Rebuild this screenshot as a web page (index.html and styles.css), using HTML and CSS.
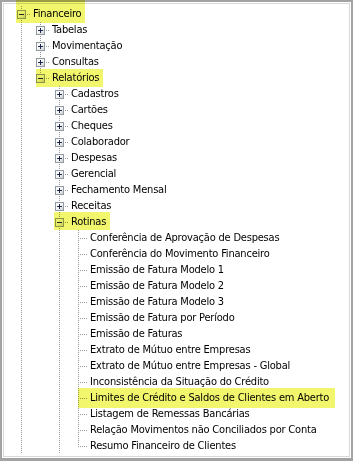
FILE: index.html
```html
<!DOCTYPE html>
<html lang="pt-BR">
<head>
<meta charset="utf-8">
<title>Financeiro</title>
<link rel="stylesheet" href="styles.css">
</head>
<body>
<svg class="defs" width="0" height="0" aria-hidden="true">
  <defs>
    <linearGradient id="bxg" x1="0" y1="0" x2="1" y2="1">
      <stop offset="0" stop-color="#ffffff"/>
      <stop offset="0.55" stop-color="#f3f3ef"/>
      <stop offset="1" stop-color="#c9c9c1"/>
    </linearGradient>
  </defs>
</svg>
<div class="frame">
  <div class="tree">
    <div class="row">
      <div class="node hl hl-root">
        <div class="cell tee"><svg class="bx" width="9" height="9" viewBox="0 0 9 9"><rect x=".5" y=".5" width="8" height="8" fill="url(#bxg)" stroke="#8f9aa5"/><path d="M2 4.5h5" stroke="#1c2550"/></svg></div>
        <span class="label">Financeiro</span>
      </div>
    </div>

    <div class="row"><div class="cell v"></div>
      <div class="node"><div class="cell tee"><svg class="bx" width="9" height="9" viewBox="0 0 9 9"><rect x=".5" y=".5" width="8" height="8" fill="url(#bxg)" stroke="#8f9aa5"/><path d="M2 4.5h5M4.5 2v5" stroke="#1c2550"/></svg></div><span class="label">Tabelas</span></div>
    </div>
    <div class="row"><div class="cell v"></div>
      <div class="node"><div class="cell tee"><svg class="bx" width="9" height="9" viewBox="0 0 9 9"><rect x=".5" y=".5" width="8" height="8" fill="url(#bxg)" stroke="#8f9aa5"/><path d="M2 4.5h5M4.5 2v5" stroke="#1c2550"/></svg></div><span class="label">Movimentação</span></div>
    </div>
    <div class="row"><div class="cell v"></div>
      <div class="node"><div class="cell tee"><svg class="bx" width="9" height="9" viewBox="0 0 9 9"><rect x=".5" y=".5" width="8" height="8" fill="url(#bxg)" stroke="#8f9aa5"/><path d="M2 4.5h5M4.5 2v5" stroke="#1c2550"/></svg></div><span class="label">Consultas</span></div>
    </div>
    <div class="row"><div class="cell v"></div>
      <div class="node hl hl-rel"><div class="cell ell"><svg class="bx" width="9" height="9" viewBox="0 0 9 9"><rect x=".5" y=".5" width="8" height="8" fill="url(#bxg)" stroke="#8f9aa5"/><path d="M2 4.5h5" stroke="#1c2550"/></svg></div><span class="label">Relatórios</span></div>
    </div>

    <div class="row"><div class="cell v"></div><div class="cell"></div>
      <div class="node"><div class="cell tee"><svg class="bx" width="9" height="9" viewBox="0 0 9 9"><rect x=".5" y=".5" width="8" height="8" fill="url(#bxg)" stroke="#8f9aa5"/><path d="M2 4.5h5M4.5 2v5" stroke="#1c2550"/></svg></div><span class="label">Cadastros</span></div>
    </div>
    <div class="row"><div class="cell v"></div><div class="cell"></div>
      <div class="node"><div class="cell tee"><svg class="bx" width="9" height="9" viewBox="0 0 9 9"><rect x=".5" y=".5" width="8" height="8" fill="url(#bxg)" stroke="#8f9aa5"/><path d="M2 4.5h5M4.5 2v5" stroke="#1c2550"/></svg></div><span class="label">Cartões</span></div>
    </div>
    <div class="row"><div class="cell v"></div><div class="cell"></div>
      <div class="node"><div class="cell tee"><svg class="bx" width="9" height="9" viewBox="0 0 9 9"><rect x=".5" y=".5" width="8" height="8" fill="url(#bxg)" stroke="#8f9aa5"/><path d="M2 4.5h5M4.5 2v5" stroke="#1c2550"/></svg></div><span class="label">Cheques</span></div>
    </div>
    <div class="row"><div class="cell v"></div><div class="cell"></div>
      <div class="node"><div class="cell tee"><svg class="bx" width="9" height="9" viewBox="0 0 9 9"><rect x=".5" y=".5" width="8" height="8" fill="url(#bxg)" stroke="#8f9aa5"/><path d="M2 4.5h5M4.5 2v5" stroke="#1c2550"/></svg></div><span class="label">Colaborador</span></div>
    </div>
    <div class="row"><div class="cell v"></div><div class="cell"></div>
      <div class="node"><div class="cell tee"><svg class="bx" width="9" height="9" viewBox="0 0 9 9"><rect x=".5" y=".5" width="8" height="8" fill="url(#bxg)" stroke="#8f9aa5"/><path d="M2 4.5h5M4.5 2v5" stroke="#1c2550"/></svg></div><span class="label">Despesas</span></div>
    </div>
    <div class="row"><div class="cell v"></div><div class="cell"></div>
      <div class="node"><div class="cell tee"><svg class="bx" width="9" height="9" viewBox="0 0 9 9"><rect x=".5" y=".5" width="8" height="8" fill="url(#bxg)" stroke="#8f9aa5"/><path d="M2 4.5h5M4.5 2v5" stroke="#1c2550"/></svg></div><span class="label">Gerencial</span></div>
    </div>
    <div class="row"><div class="cell v"></div><div class="cell"></div>
      <div class="node"><div class="cell tee"><svg class="bx" width="9" height="9" viewBox="0 0 9 9"><rect x=".5" y=".5" width="8" height="8" fill="url(#bxg)" stroke="#8f9aa5"/><path d="M2 4.5h5M4.5 2v5" stroke="#1c2550"/></svg></div><span class="label">Fechamento Mensal</span></div>
    </div>
    <div class="row"><div class="cell v"></div><div class="cell"></div>
      <div class="node"><div class="cell tee"><svg class="bx" width="9" height="9" viewBox="0 0 9 9"><rect x=".5" y=".5" width="8" height="8" fill="url(#bxg)" stroke="#8f9aa5"/><path d="M2 4.5h5M4.5 2v5" stroke="#1c2550"/></svg></div><span class="label">Receitas</span></div>
    </div>
    <div class="row"><div class="cell v"></div><div class="cell"></div>
      <div class="node hl hl-rot"><div class="cell tee"><svg class="bx" width="9" height="9" viewBox="0 0 9 9"><rect x=".5" y=".5" width="8" height="8" fill="url(#bxg)" stroke="#8f9aa5"/><path d="M2 4.5h5" stroke="#1c2550"/></svg></div><span class="label">Rotinas</span></div>
    </div>

    <div class="row"><div class="cell v"></div><div class="cell"></div><div class="cell v"></div>
      <div class="node"><div class="cell tee"></div><span class="label">Conferência de Aprovação de Despesas</span></div></div>
    <div class="row"><div class="cell v"></div><div class="cell"></div><div class="cell v"></div>
      <div class="node"><div class="cell tee"></div><span class="label">Conferência do Movimento Financeiro</span></div></div>
    <div class="row"><div class="cell v"></div><div class="cell"></div><div class="cell v"></div>
      <div class="node"><div class="cell tee"></div><span class="label">Emissão de Fatura Modelo 1</span></div></div>
    <div class="row"><div class="cell v"></div><div class="cell"></div><div class="cell v"></div>
      <div class="node"><div class="cell tee"></div><span class="label">Emissão de Fatura Modelo 2</span></div></div>
    <div class="row"><div class="cell v"></div><div class="cell"></div><div class="cell v"></div>
      <div class="node"><div class="cell tee"></div><span class="label">Emissão de Fatura Modelo 3</span></div></div>
    <div class="row"><div class="cell v"></div><div class="cell"></div><div class="cell v"></div>
      <div class="node"><div class="cell tee"></div><span class="label">Emissão de Fatura por Período</span></div></div>
    <div class="row"><div class="cell v"></div><div class="cell"></div><div class="cell v"></div>
      <div class="node"><div class="cell tee"></div><span class="label">Emissão de Faturas</span></div></div>
    <div class="row"><div class="cell v"></div><div class="cell"></div><div class="cell v"></div>
      <div class="node"><div class="cell tee"></div><span class="label">Extrato de Mútuo entre Empresas</span></div></div>
    <div class="row"><div class="cell v"></div><div class="cell"></div><div class="cell v"></div>
      <div class="node"><div class="cell tee"></div><span class="label">Extrato de Mútuo entre Empresas - Global</span></div></div>
    <div class="row"><div class="cell v"></div><div class="cell"></div><div class="cell v"></div>
      <div class="node"><div class="cell tee"></div><span class="label">Inconsistência da Situação do Crédito</span></div></div>
    <div class="row"><div class="cell v"></div><div class="cell"></div><div class="cell v"></div>
      <div class="node hl hl-leaf"><div class="cell tee"></div><span class="label">Limites de Crédito e Saldos de Clientes em Aberto</span></div></div>
    <div class="row"><div class="cell v"></div><div class="cell"></div><div class="cell v"></div>
      <div class="node"><div class="cell tee"></div><span class="label">Listagem de Remessas Bancárias</span></div></div>
    <div class="row"><div class="cell v"></div><div class="cell"></div><div class="cell v"></div>
      <div class="node"><div class="cell tee"></div><span class="label">Relação Movimentos não Conciliados por Conta</span></div></div>
    <div class="row"><div class="cell v"></div><div class="cell"></div><div class="cell v"></div>
      <div class="node"><div class="cell ell"></div><span class="label">Resumo Financeiro de Clientes</span></div></div>
  </div>
</div>
</body>
</html>
```

FILE: styles.css
```css
html, body {
  margin: 0;
  padding: 0;
  background: #ffffff;
}

body {
  width: 356px;
  height: 461px;
  overflow: hidden;
  font-family: "DejaVu Sans Condensed", "DejaVu Sans", "Liberation Sans", sans-serif;
  font-size: 11px;
  letter-spacing: -0.2px;
  color: #000000;
}

.defs {
  display: block;
  width: 0;
  height: 0;
}

.frame {
  box-sizing: border-box;
  width: 353px;
  height: 461px;
  border: 2px solid #a3a3a3;
  border-bottom-width: 3px;
  box-shadow: inset 0 0 0 1px #ffffff, inset 0 0 0 2px #d9d9d9;
  padding: 4px 0 0 10px;
}

.tree {
  display: flex;
  flex-direction: column;
}

.row {
  display: flex;
  height: 16px;
}

.node {
  display: flex;
  position: relative;
}

.cell {
  flex: none;
  width: 19px;
  height: 16px;
  display: flex;
  align-items: flex-start;
}

.v {
  background: repeating-linear-gradient(to bottom, #999999 0 1px, transparent 1px 2px) 9px 0 / 1px 16px no-repeat;
}

.tee {
  background:
    repeating-linear-gradient(to bottom, #999999 0 1px, transparent 1px 2px) 9px 0 / 1px 16px no-repeat,
    repeating-linear-gradient(to right, #999999 0 1px, transparent 1px 2px) 9px 8px / 10px 1px no-repeat;
}

.ell {
  background:
    repeating-linear-gradient(to bottom, #999999 0 1px, transparent 1px 2px) 9px 0 / 1px 9px no-repeat,
    repeating-linear-gradient(to right, #999999 0 1px, transparent 1px 2px) 9px 8px / 10px 1px no-repeat;
}

.bx {
  display: block;
  margin: 4px 0 0 5px;
}

.label {
  display: block;
  padding-left: 2px;
  line-height: 16px;
  white-space: nowrap;
}

.hl::after {
  content: "";
  position: absolute;
  background: #f2f66c;
  mix-blend-mode: multiply;
  pointer-events: none;
}

.hl-root::after {
  top: -6px;
  bottom: -1px;
  left: 4px;
  right: -4px;
}

.hl-rel::after {
  top: -1px;
  bottom: -1px;
  left: 5px;
  right: -4px;
}

.hl-rot::after {
  top: -2px;
  bottom: 0;
  left: 4px;
  right: -4px;
}

.hl-leaf::after {
  top: -2px;
  bottom: -2px;
  left: 9px;
  right: -6px;
}
```
